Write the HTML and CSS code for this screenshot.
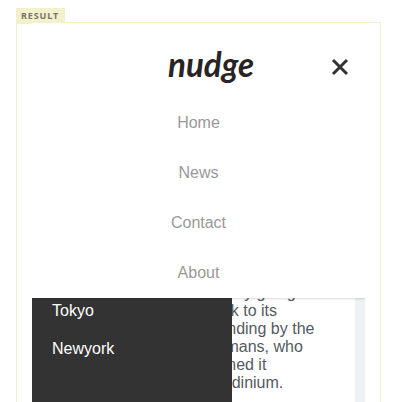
FILE: index.html
```html
<!DOCTYPE html>
<html lang="en">
<head>
<meta charset="utf-8">
<title>nudge</title>
<link rel="stylesheet" href="styles.css">
</head>
<body>
<span class="tab">RESULT</span>
<div class="result">
  <div class="frame">
    <nav class="menu">
      <svg class="logo" width="94" height="48" viewBox="0 0 94 48" role="img" aria-label="nudge"><text x="4" y="34" textLength="86" lengthAdjust="spacingAndGlyphs">nudge</text></svg>
      <svg class="close" width="18" height="18" viewBox="0 0 18 18"><path d="M2 2 16 16M16 2 2 16"/></svg>
      <a>Home</a>
      <a>News</a>
      <a>Contact</a>
      <a>About</a>
    </nav>
    <div class="content">
      <aside class="cities">
        <a>Tokyo</a>
        <a>Newyork</a>
      </aside>
      <article class="story"><p>history going<br>back to its<br>founding by the<br>Romans, who<br>named it<br>Londinium.</p></article>
    </div>
  </div>
</div>
</body>
</html>
```

FILE: styles.css
```css
* { box-sizing: border-box; }
html, body { height: 100%; }
body {
  margin: 0;
  padding: 22px 0 0 16px;
  overflow: hidden;
  background: #fff;
  font: 16px/18px "Liberation Sans", Arial, sans-serif;
}
.tab {
  position: absolute;
  left: 16px;
  top: 8px;
  width: 49px;
  height: 16px;
  padding-left: 5px;
  background: #f3f0cb;
  color: #77766a;
  font: 700 9px/16px "Noto Sans", sans-serif;
  letter-spacing: .9px;
}
.result {
  width: 365px;
  height: 400px;
  padding: 0 15px;
  border: 1px solid #f3f0cb;
}
.frame { height: 100%; }
.menu {
  position: relative;
  z-index: 1;
  display: flex;
  flex-direction: column;
  align-items: center;
  height: 275px;
  padding-top: 20px;
  background: #fff;
  box-shadow: 0 1px 2px rgba(0, 0, 0, .15);
  clip-path: inset(0 0 -5px 0);
}
.menu a {
  height: 50px;
  color: #999;
  line-height: 50px;
}
.logo {
  flex: none;
  margin: 0 0 7px 25px;
}
.logo text {
  fill: #282425;
  font: italic 700 35px Lato, sans-serif;
}
.close {
  position: absolute;
  top: 35px;
  left: 299px;
}
.close path {
  fill: none;
  stroke: #333;
  stroke-width: 3;
}
.content {
  display: flex;
  height: 120px;
  overflow: hidden;
}
.cities {
  position: relative;
  width: 200px;
  padding: 4px 20px;
  background: #333;
  color: #fff;
}
.cities a {
  display: block;
  margin-bottom: 20px;
}
.story {
  width: 133px;
  border-right: 10px solid #edf1f3;
  color: #555a60;
  white-space: nowrap;
}
.story p { margin: -14px 0 0 -27px; }
```
